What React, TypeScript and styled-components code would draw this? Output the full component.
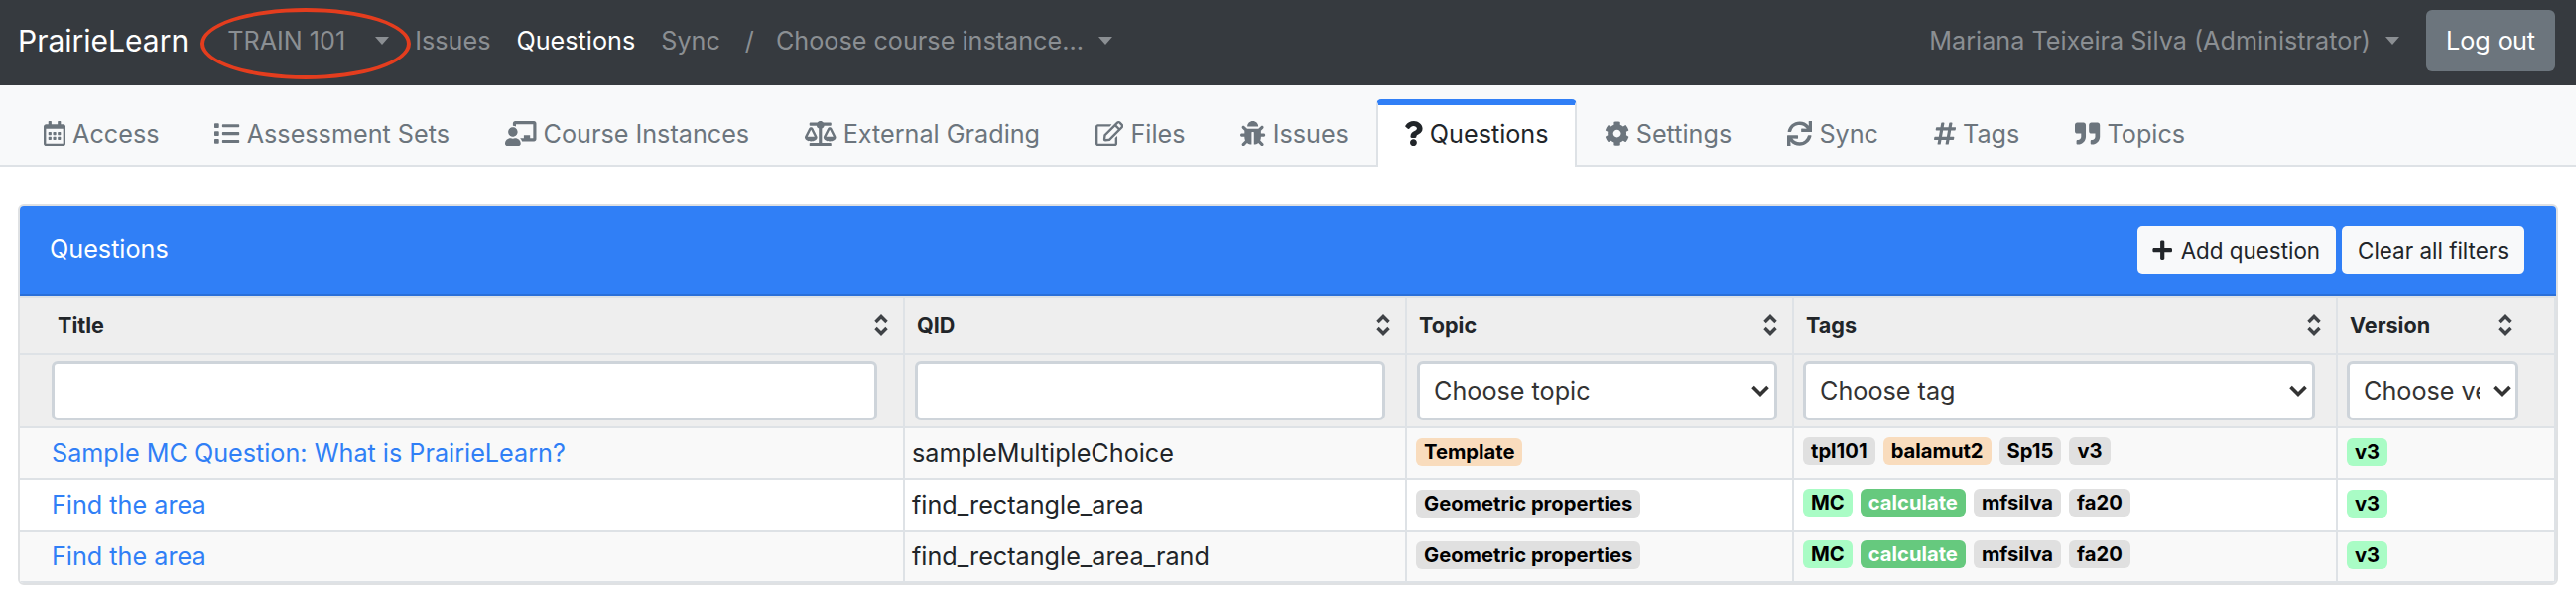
import React from 'react';
import styled, { createGlobalStyle } from 'styled-components';
import {
  FaRegCalendarAlt,
  FaList,
  FaChalkboardTeacher,
  FaBalanceScale,
  FaRegEdit,
  FaBug,
  FaQuestion,
  FaCog,
  FaSync,
  FaHashtag,
  FaQuoteRight,
  FaPlus,
} from 'react-icons/fa';

// iconWidth: 아이콘 viewBox 비율 (em)
const TABS = [
  { label: 'Access', icon: <FaRegCalendarAlt />, iconWidth: 0.875 },
  { label: 'Assessment Sets', icon: <FaList />, iconWidth: 1 },
  { label: 'Course Instances', icon: <FaChalkboardTeacher />, iconWidth: 1.25 },
  { label: 'External Grading', icon: <FaBalanceScale />, iconWidth: 1.25 },
  { label: 'Files', icon: <FaRegEdit />, iconWidth: 1.125 },
  { label: 'Issues', icon: <FaBug />, iconWidth: 1 },
  { label: 'Questions', icon: <FaQuestion />, iconWidth: 0.75, active: true },
  { label: 'Settings', icon: <FaCog />, iconWidth: 1 },
  { label: 'Sync', icon: <FaSync />, iconWidth: 1 },
  { label: 'Tags', icon: <FaHashtag />, iconWidth: 0.875 },
  { label: 'Topics', icon: <FaQuoteRight />, iconWidth: 1 },
];

type Tone = 'gray' | 'orange' | 'mint' | 'green';

const ROWS: {
  title: string;
  qid: string;
  topic: [string, Tone];
  tags: [string, Tone][];
}[] = [
  {
    title: 'Sample MC Question: What is PrairieLearn?',
    qid: 'sampleMultipleChoice',
    topic: ['Template', 'orange'],
    tags: [
      ['tpl101', 'gray'],
      ['balamut2', 'orange'],
      ['Sp15', 'gray'],
      ['v3', 'gray'],
    ],
  },
  {
    title: 'Find the area',
    qid: 'find_rectangle_area',
    topic: ['Geometric properties', 'gray'],
    tags: [
      ['MC', 'mint'],
      ['calculate', 'green'],
      ['mfsilva', 'gray'],
      ['fa20', 'gray'],
    ],
  },
  {
    title: 'Find the area',
    qid: 'find_rectangle_area_rand',
    topic: ['Geometric properties', 'gray'],
    tags: [
      ['MC', 'mint'],
      ['calculate', 'green'],
      ['mfsilva', 'gray'],
      ['fa20', 'gray'],
    ],
  },
];

const COLUMNS = [
  { title: 'Title', width: 891 },
  { title: 'QID', width: 506 },
  { title: 'Topic', width: 390 },
  { title: 'Tags', width: 548 },
  { title: 'Version', width: 220 },
];

const TONES: Record<Tone, { bg: string; fg: string }> = {
  gray: { bg: '#e0e0e0', fg: '#000' },
  orange: { bg: '#f9dcbd', fg: '#000' },
  mint: { bg: '#a9fcc5', fg: '#000' },
  green: { bg: '#66c97e', fg: '#fff' },
};

function SortIcon() {
  return (
    <SortSvg viewBox="0 0 16 22" aria-hidden="true">
      <path d="M2.5 8 8 2.5 13.5 8M2.5 14 8 19.5 13.5 14" />
    </SortSvg>
  );
}

function Chooser({ label, wide }: { label: string; wide: number }) {
  return (
    <SelectWrap $width={wide}>
      <FilterSelect defaultValue={label}>
        <option>{label}</option>
      </FilterSelect>
      <Chevron viewBox="0 0 20 14" aria-hidden="true">
        <path d="M2.5 3 10 10.5 17.5 3" />
      </Chevron>
    </SelectWrap>
  );
}

export default function App() {
  return (
    <>
      <GlobalStyle />
      <Navbar>
        <Brand>PrairieLearn</Brand>
        <CourseMenu>
          TRAIN 101
          <Caret />
          <Circled />
        </CourseMenu>
        <NavLink>Issues</NavLink>
        <NavLink $active>Questions</NavLink>
        <NavLink>Sync</NavLink>
        <Slash>/</Slash>
        <InstanceMenu>
          Choose course instance...
          <Caret />
        </InstanceMenu>
        <UserMenu>
          Mariana Teixeira Silva (Administrator)
          <Caret />
        </UserMenu>
        <LogOut>Log out</LogOut>
      </Navbar>

      <TabBar>
        {TABS.map((tab) => (
          <Tab key={tab.label} $active={tab.active} $iconWidth={tab.iconWidth}>
            {tab.icon}
            {tab.label}
          </Tab>
        ))}
      </TabBar>

      <Main>
        <Card>
          <CardHeader>
            <CardTitle>Questions</CardTitle>
            <HeaderButtons>
              <AddButton>
                <FaPlus />
                Add question
              </AddButton>
              <LightButton>Clear all filters</LightButton>
            </HeaderButtons>
          </CardHeader>
          <Table>
            <colgroup>
              {COLUMNS.map((c) => (
                <col key={c.title} width={c.width} />
              ))}
            </colgroup>
            <thead>
              <HeadRow>
                {COLUMNS.map((c, i) => (
                  <HeadCell key={c.title} $first={i === 0}>
                    <HeadInner $last={i === 4}>
                      {c.title}
                      <SortIcon />
                    </HeadInner>
                  </HeadCell>
                ))}
              </HeadRow>
              <FilterRow>
                <FilterCell $pad="0 26px 0 32px">
                  <FilterInput />
                </FilterCell>
                <FilterCell $pad="0 20px 0 10px">
                  <FilterInput />
                </FilterCell>
                <FilterCell $pad="0 14px 0 10px">
                  <Chooser label="Choose topic" wide={363} />
                </FilterCell>
                <FilterCell $pad="0 12px 0 9px">
                  <Chooser label="Choose tag" wide={516} />
                </FilterCell>
                <FilterCell $pad="0 10px 0 9px">
                  <Chooser label="Choose version" wide={173} />
                </FilterCell>
              </FilterRow>
            </thead>
            <tbody>
              {ROWS.map((row, i) => (
                <BodyRow key={row.qid} $striped={i % 2 === 0}>
                  <TitleCell>
                    <TitleLink>{row.title}</TitleLink>
                  </TitleCell>
                  <QidCell>{row.qid}</QidCell>
                  <BadgeCell>
                    <Badge $tone={row.topic[1]}>{row.topic[0]}</Badge>
                  </BadgeCell>
                  <BadgeCell>
                    <BadgeList>
                      {row.tags.map(([name, tone]) => (
                        <Badge key={name} $tone={tone}>
                          {name}
                        </Badge>
                      ))}
                    </BadgeList>
                  </BadgeCell>
                  <BadgeCell>
                    <Badge $tone="mint">v3</Badge>
                  </BadgeCell>
                </BodyRow>
              ))}
            </tbody>
          </Table>
        </Card>
      </Main>
    </>
  );
}

const GlobalStyle = createGlobalStyle`
  * {
    box-sizing: border-box;
  }

  body {
    margin: 0;
    background: #fff;
    color: #212529;
    font-family: Inter, "Liberation Sans", sans-serif;
  }
`;

/* ----------------- NAVBAR ----------------- */

const Navbar = styled.nav`
  display: flex;
  align-items: center;
  height: 86px;
  padding: 0 21px 4px 18px;
  background: #363a3f;
  font-size: 25.2px;
  color: #8b8f93;
`;

const Brand = styled.div`
  font-size: 30px;
  color: #fff;
  margin-right: 39px;
`;

const CourseMenu = styled.div`
  position: relative;
  display: flex;
  align-items: center;
  gap: 30px;
  margin-right: 13px;
`;

/* 스크린샷 위에 손으로 그린 빨간 원 */
const Circled = styled.span`
  position: absolute;
  left: -27px;
  top: -18px;
  width: 212px;
  height: 72px;
  border: 4px solid #e43d1e;
  border-radius: 50%;
`;

const Caret = styled.span`
  display: inline-block;
  width: 0;
  height: 0;
  border-top: 8px solid currentColor;
  border-left: 7px solid transparent;
  border-right: 7px solid transparent;
`;

const NavLink = styled.a<{ $active?: boolean }>`
  padding: 0 13px;
  color: ${(p) => (p.$active ? '#fff' : '#8b8f93')};
`;

const Slash = styled.span`
  padding: 0 11px 0 12px;
`;

const InstanceMenu = styled.div`
  display: flex;
  align-items: center;
  gap: 15px;
  padding-left: 11px;
`;

const UserMenu = styled.div`
  display: flex;
  align-items: center;
  gap: 15px;
  margin-left: auto;
  margin-right: 27px;
`;

const LogOut = styled.button`
  width: 130px;
  height: 62px;
  border: none;
  border-radius: 6px;
  background: #6c757d;
  color: #fff;
  font: inherit;
`;

/* ----------------- TABS ----------------- */

const TabBar = styled.div`
  display: flex;
  align-items: flex-end;
  height: 82px;
  padding: 0 16px;
  background: #f8f9fa;
  border-bottom: 2px solid #dee2e6;
`;

const Tab = styled.a<{ $active?: boolean; $iconWidth: number }>`
  display: flex;
  align-items: center;
  gap: 7px;
  height: 68px;
  margin-bottom: -2px;
  padding: 0 26px 5px;
  font-size: 25.2px;
  color: ${(p) => (p.$active ? '#212529' : '#6c757d')};
  background: ${(p) => (p.$active ? '#fff' : 'transparent')};
  border-top: 6px solid ${(p) => (p.$active ? '#307ff6' : 'transparent')};
  border-left: 2px solid ${(p) => (p.$active ? '#dee2e6' : 'transparent')};
  border-right: 2px solid ${(p) => (p.$active ? '#dee2e6' : 'transparent')};
  border-radius: 5px 5px 0 0;

  svg {
    flex: none;
    width: ${(p) => p.$iconWidth}em;
    height: 1em;
  }
`;

/* ----------------- CARD ----------------- */

const Main = styled.main`
  padding: 38px 18px 0;
`;

const Card = styled.section`
  border: 2px solid #dfe1e3;
  border-radius: 6px;
  overflow: hidden;
`;

const CardHeader = styled.header`
  display: flex;
  align-items: center;
  justify-content: space-between;
  height: 90px;
  padding: 0 32px 0 30px;
  background: #307ff6;
  border-bottom: 2px solid #2a6fd8;
`;

const CardTitle = styled.div`
  font-size: 25.2px;
  color: #fff;
  margin-top: -2px;
`;

const HeaderButtons = styled.div`
  display: flex;
  gap: 6px;
`;

const LightButton = styled.button`
  display: flex;
  align-items: center;
  gap: 7px;
  height: 48px;
  padding: 0 16px;
  border: none;
  border-radius: 5px;
  background: #f8f9fa;
  color: #212529;
  font: inherit;
  font-size: 22.4px;
`;

const AddButton = styled(LightButton)`
  padding-left: 14px;
`;

/* ----------------- TABLE ----------------- */

const Table = styled.table`
  width: 2556px;
  table-layout: fixed;
  border-collapse: collapse;
`;

const HeadRow = styled.tr`
  height: 58px;
  background: #eeeeee;
`;

const HeadCell = styled.th<{ $first?: boolean }>`
  padding: 0 14px 0 ${(p) => (p.$first ? '38px' : '12px')};
  border: 2px solid #dee2e6;
  border-left-width: 0;
  font-size: 21.6px;
  font-weight: 700;
  text-align: left;
`;

const HeadInner = styled.div<{ $last?: boolean }>`
  display: flex;
  align-items: center;
  justify-content: space-between;
  padding-right: ${(p) => (p.$last ? '28px' : '0')};
`;

const SortSvg = styled.svg`
  width: 16px;
  height: 22px;

  path {
    fill: none;
    stroke: #3f4246;
    stroke-width: 3.4;
  }
`;

const FilterRow = styled.tr`
  height: 74px;
  background: #eeeeee;
`;

const FilterCell = styled.th<{ $pad: string }>`
  padding: ${(p) => p.$pad};
  border: 2px solid #dee2e6;
  border-left-width: 0;
`;

const FilterInput = styled.input`
  display: block;
  width: 100%;
  height: 60px;
  border: 3px solid #ced4da;
  border-radius: 6px;
  background: #fff;
`;

const SelectWrap = styled.div<{ $width: number }>`
  position: relative;
  width: ${(p) => p.$width}px;
`;

const FilterSelect = styled.select`
  display: block;
  width: 100%;
  height: 60px;
  padding: 0 36px 0 14px;
  border: 3px solid #ced4da;
  border-radius: 6px;
  background: #fff;
  color: #333;
  font-family: inherit;
  font-size: 25.2px;
  appearance: none;
`;

const Chevron = styled.svg`
  position: absolute;
  right: 7px;
  top: 23px;
  width: 20px;
  height: 14px;
  pointer-events: none;

  path {
    fill: none;
    stroke: #333;
    stroke-width: 3.6;
  }
`;

const BodyRow = styled.tr<{ $striped: boolean }>`
  height: 52px;
  background: ${(p) => (p.$striped ? '#f9f9f9' : '#fff')};
`;

const BodyCell = styled.td`
  padding: 0 9px;
  border: 2px solid #dee2e6;
  border-left-width: 0;
  font-size: 25.2px;
  white-space: nowrap;
`;

const TitleCell = styled(BodyCell)`
  padding-left: 32px;
`;

const QidCell = styled(BodyCell)`
  padding-left: 7px;
`;

const BadgeCell = styled(BodyCell)`
  padding-bottom: 5px;
`;

const TitleLink = styled.a`
  color: #307ff6;
`;

const BadgeList = styled.div`
  display: flex;
  gap: 8px;
`;

const Badge = styled.span<{ $tone: Tone }>`
  display: inline-block;
  height: 28px;
  padding: 0 8px;
  border-radius: 6px;
  background: ${(p) => TONES[p.$tone].bg};
  color: ${(p) => TONES[p.$tone].fg};
  font-size: 20.2px;
  font-weight: 700;
  line-height: 28px;
  vertical-align: middle;
`;
